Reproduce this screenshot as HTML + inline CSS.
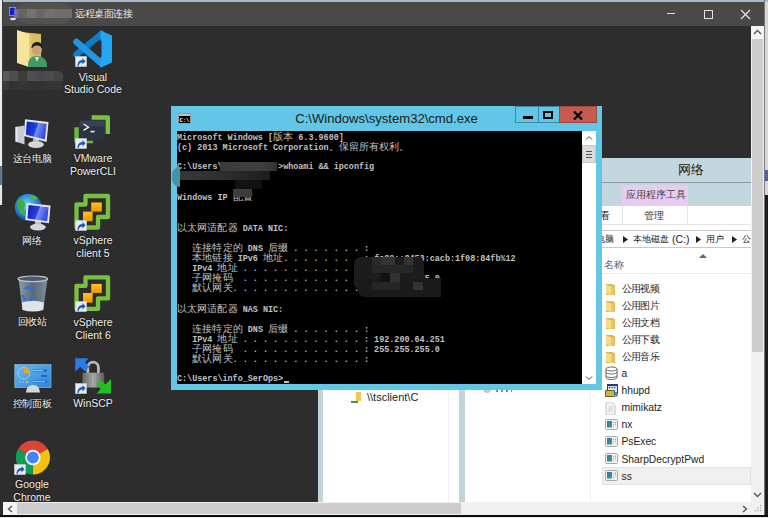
<!DOCTYPE html>
<html><head><meta charset="utf-8">
<style>
*{margin:0;padding:0;box-sizing:border-box}
html,body{width:768px;height:518px;overflow:hidden;background:#2d2d2d;font-family:"Liberation Sans",sans-serif}
.a{position:absolute}
/* outer */
#topstrip{left:0;top:0;width:768px;height:2px;background:#a8bacb}
#leftstrip{left:0;top:0;width:3px;height:205px;background:linear-gradient(180deg,#ececec 0,#ececec 166px,#5a7898 166px,#5a7898 185px,#e6e6e6 185px);border-right:1px solid #3a3a3a}
#rightstrip{left:764px;top:0;width:4px;height:518px;background:linear-gradient(180deg,#a8bacb 0,#a8bacb 2px,#d6d6d6 2px,#d6d6d6 170px,#4a6888 170px,#4a6888 181px,#d6d6d6 181px,#d6d6d6 195px,#1e1e1e 195px);border-left:1px solid #777}
#rdptitle{left:2px;top:2px;width:762px;height:24px;background:#4b4947}
#desk{left:3px;top:26px;width:748px;height:476px;background:#2d2d2d}
#vsb{left:751px;top:26px;width:13px;height:476px;background:#f0f0f0}
#vthumb{left:752px;top:39px;width:11px;height:313px;background:#cdcdcd}
#hsb{left:3px;top:502px;width:761px;height:13px;background:#f0f0f0}
#hthumb{left:17px;top:503px;width:444px;height:11px;background:#cdcdcd}
#bottom{left:0;top:515px;width:768px;height:3px;background:linear-gradient(180deg,#0c0c0c 0,#0c0c0c 2px,#e8e8e8 2px)}
#bottomline{left:0;top:515px;width:0;height:0}
.rdpt{left:75px;top:7px;font-size:10px;letter-spacing:-0.45px;color:#e8e8e8;line-height:14px}
/* desktop icons */
.lbl{position:absolute;color:#f0f0f0;font-size:10.5px;line-height:12.5px;text-align:center;width:70px;text-shadow:0 0 2px #000}
.lbl i{font-style:normal;font-size:10px;letter-spacing:-0.35px}
/* windows behind */
#winA{left:318px;top:300px;width:142px;height:202px;background:#fff;border-left:5px solid #c3d3dc}
#winB{left:459px;top:300px;width:150px;height:202px;background:#fff;border-left:6px solid #c3d3dc}
#explorer{left:596px;top:158px;width:155px;height:344px;background:#fff}
/* cmd */
#cmd{left:171px;top:106px;width:431px;height:284px;background:#62c6e6}
#con{left:177px;top:131px;width:405px;height:253px;background:#000;overflow:hidden}
.cl{position:absolute;left:0;height:10.12px;white-space:pre;font-family:"Liberation Mono",monospace;font-size:8.43px;line-height:10.12px;color:#c0c0c0;font-weight:bold}
.cl i.c{font-style:normal;display:inline-block;width:10.12px;text-align:center;font-weight:normal;font-family:"Liberation Sans",sans-serif;font-size:10px}
#csb{left:582px;top:131px;width:14px;height:253px;background:#fff}
.fi{position:absolute;left:605px;height:17px;width:146px}
.fic{position:absolute;left:0;top:2.5px}.fic svg{display:block}
.fnm{position:absolute;left:16.5px;top:2px;font-size:10.25px;line-height:13px;color:#1e1e1e;white-space:nowrap}
.fnm i.k{font-style:normal;display:inline-block;width:9.4px;font-size:10px}
</style></head><body>
<div class="a" id="topstrip"></div>
<div class="a" id="rdptitle"></div>
<div class="a" id="desk"></div>
<div class="a" id="leftstrip"></div>
<div class="a" id="rightstrip"></div>
<div class="a" id="vsb"></div>
<div class="a" id="vthumb"></div>
<div class="a" id="hsb"></div>
<div class="a" id="hthumb"></div>
<div class="a" id="bottom"></div>
<div class="a" id="bottomline"></div>

<!-- RDP title -->
<svg class="a" style="left:9px;top:7px" width="8" height="14" viewBox="0 0 8 14"><rect x=".5" y=".5" width="6" height="8" fill="#1020d0" stroke="#a0a8b8" stroke-width=".8"/><ellipse cx="4" cy="12" rx="3" ry="1.3" fill="#e0e0e0"/></svg>
<div class="a" style="left:16px;top:3px;width:56px;height:21px;background:#53524f;border-radius:10px"></div>
<div class="a" style="left:14px;top:8.5px;width:58px;height:9.5px;background:linear-gradient(90deg,#6a6fc0 0,#6a6fc0 4px,#666563 4px,#666563 13px,#757371 13px,#757371 22px,#6a6866 22px,#6a6866 31px,#737170 31px,#737170 40px,#6f6d6b 40px)"></div>
<div class="a rdpt">远程桌面连接</div>
<div class="a" style="left:667px;top:13px;width:8px;height:1px;background:#e0e0e0"></div>
<div class="a" style="left:704px;top:10px;width:9px;height:9px;border:1px solid #e0e0e0"></div>
<svg class="a" style="left:740px;top:9px" width="11" height="11" viewBox="0 0 11 11"><path d="M1 1L10 10M10 1L1 10" stroke="#e6e6e6" stroke-width="1.2"/></svg>
<!-- scroll arrows -->
<div class="a" style="left:751px;top:26px;width:13px;height:13px;background:#f4f4f4"></div>
<svg class="a" style="left:753px;top:29px" width="9" height="6" viewBox="0 0 9 6"><path d="M1 5L4.5 1.5L8 5" fill="none" stroke="#555" stroke-width="1.4"/></svg>
<svg class="a" style="left:753px;top:492px" width="9" height="6" viewBox="0 0 9 6"><path d="M1 1L4.5 4.5L8 1" fill="none" stroke="#555" stroke-width="1.4"/></svg>
<div class="a" style="left:3px;top:502px;width:14px;height:13px;background:#f4f4f4"></div>
<svg class="a" style="left:7px;top:505px" width="6" height="8" viewBox="0 0 6 8"><path d="M5 1L1.5 4L5 7" fill="none" stroke="#555" stroke-width="1.4"/></svg>
<svg class="a" style="left:742px;top:505px" width="6" height="8" viewBox="0 0 6 8"><path d="M1 1L4.5 4L1 7" fill="none" stroke="#555" stroke-width="1.4"/></svg>

<!-- desktop icons -->
<!-- user folder -->
<svg class="a" style="left:16px;top:29px" width="32" height="40" viewBox="0 0 32 40"><path d="M5 3l20 2v28H5z" fill="#dcbf5c"/><path d="M1 1l12 4v33L1 34z" fill="#f6e39c"/><path d="M13 5l2 1v31l-2 1z" fill="#e6cc70"/><path d="M12 36c0-6 4-9 9-9s10 3 10 9v2H12z" fill="#3f9a68"/><path d="M19 28l2 5 2-5z" fill="#e8e8e8"/><circle cx="21" cy="21" r="5" fill="#c9a27a"/><path d="M15.5 19c0-4 3-6 5.5-6s5.5 1.5 5.5 5l-1 1c-1-2-3-2.5-5-2.5s-3.5 1-4 2.5z" fill="#1e1e1e"/></svg>
<div class="a" style="left:3px;top:71px;width:60px;height:10px;background:linear-gradient(90deg,#585a5e 0,#585a5e 6px,#4e4e4e 6px,#4e4e4e 15px,#3e3c3a 15px,#3e3c3a 24px,#4f4f51 24px,#4f4f51 33px,#4a4a4a 33px,#4a4a4a 42px,#4c4c4c 42px,#4c4c4c 51px,#454545 51px);border-radius:0 5px 0 0"></div>
<div class="a" style="left:3px;top:81px;width:60px;height:9px;background:linear-gradient(90deg,#3c3c3c 0,#3c3c3c 6px,#333 6px,#333 15px,#363636 15px,#363636 24px,#323232 24px,#323232 42px,#343434 42px)"></div>
<!-- vscode -->
<svg class="a" style="left:73px;top:30px" width="40" height="38" viewBox="0 0 40 38"><path d="M3.5 24.5L28.5 4" stroke="#0e7cc8" stroke-width="6.5" stroke-linecap="round"/><path d="M3.5 12L28.5 33.5" stroke="#1c98e4" stroke-width="6.5" stroke-linecap="round"/><path d="M27.5 .5L39 5.5V32.5L27.5 37.7L27.5 27L28.5 27V10.5L27.5 10.5z" fill="#24a6f0"/></svg>
<svg class="a" style="left:74.5px;top:56.3px" width="12" height="11" viewBox="0 0 12 11"><rect x=".5" y=".5" width="11" height="10" fill="#e8ecf0" stroke="#c8ccd0" stroke-width=".6"/><path d="M2.5 10C2.5 6 4.5 4 7.5 4V2l3 3.2-3 3.2V6.5C5.5 6.5 4 7.5 3.5 10z" fill="#1f58b8"/></svg>
<div class="lbl" style="left:58px;top:71px;line-height:12px">Visual<br>Studio Code</div>
<!-- this pc -->
<svg class="a" style="left:8px;top:110px" width="50" height="40" viewBox="0 0 50 40"><defs><linearGradient id="scr" x1="0" y1="0" x2="1" y2="0.3"><stop offset="0" stop-color="#0c1cb8"/><stop offset=".55" stop-color="#2a40e0"/><stop offset=".6" stop-color="#7890f0"/><stop offset="1" stop-color="#3850e0"/></linearGradient></defs>
<path d="M7.5 17L16.5 15.5V34.5L7.5 31.5z" fill="#c8ccd2"/><path d="M7.5 17L9.5 16.7V32.2L7.5 31.5z" fill="#e8eaec"/>
<ellipse cx="28" cy="34.5" rx="8" ry="3.5" fill="#d4d6d8"/><path d="M25 29h6v3h-6z" fill="#bfc2c5"/>
<path d="M17 9.2L40.5 12L38.6 31.9L15.9 26z" fill="#e6e9ec"/><path d="M18.8 11.4L38.6 13.8L37 29.6L17.8 24.8z" fill="url(#scr)"/></svg>
<div class="lbl" style="left:-3px;top:152px"><i>这台电脑</i></div>
<!-- powercli -->
<svg class="a" style="left:68px;top:108px" width="50" height="45" viewBox="0 0 50 45">
<path d="M23.6 7.2H40a2 2 0 0 1 2 2V26h-4.5V11.7H23.6z" fill="#78c440"/>
<path d="M6.3 19.3h4.5V30.7H25v4.5H8.3a2 2 0 0 1-2-2z" fill="#6cb83a"/>
<rect x="11.4" y="12.5" width="25.8" height="20.3" rx="1.5" fill="#2c3242"/><rect x="11.4" y="12.5" width="25.8" height="6" rx="1.5" fill="#3a4152"/>
<path d="M15.5 16l5 3.2-5 3.2" fill="none" stroke="#f0f0f0" stroke-width="1.4"/><path d="M22.5 23.6h4" stroke="#f0f0f0" stroke-width="1.6"/></svg>
<svg class="a" style="left:74.6px;top:137.7px" width="12" height="11" viewBox="0 0 12 11"><rect x=".5" y=".5" width="11" height="10" fill="#e8ecf0" stroke="#c8ccd0" stroke-width=".6"/><path d="M2.5 10C2.5 6 4.5 4 7.5 4V2l3 3.2-3 3.2V6.5C5.5 6.5 4 7.5 3.5 10z" fill="#1f58b8"/></svg>
<div class="lbl" style="left:58px;top:152px">VMware<br>PowerCLI</div>
<!-- network -->
<svg class="a" style="left:8px;top:188px" width="50" height="45" viewBox="0 0 50 45"><defs><radialGradient id="glb" cx=".45" cy=".4" r=".6"><stop offset="0" stop-color="#7ad8f8"/><stop offset=".6" stop-color="#2a88d8"/><stop offset="1" stop-color="#1a4aa0"/></radialGradient></defs>
<circle cx="20.3" cy="19.3" r="13.5" fill="url(#glb)"/><path d="M10 12c3-1 6 0 7 3s-2 4-1 7 3 3 2 6c-3 0-6-3-7-6s-2-6-1-10z" fill="#3cb040"/><path d="M22 7c3 0 6 1 8 3l-3 2c-2-1-4-1-5-2z" fill="#48b848"/>
<ellipse cx="29.9" cy="39.1" rx="8" ry="3.5" fill="#d4d6d8"/><path d="M27 33h6v3h-6z" fill="#bfc2c5"/>
<path d="M18.8 15L42.5 17.4L41 35.2L17.4 31.9z" fill="#e6e9ec"/><path d="M20.6 17.1L40.6 19.2L39.3 33.2L19.4 30.4z" fill="url(#scr)"/></svg>
<div class="lbl" style="left:-3px;top:234px"><i>网络</i></div>
<!-- vsphere 5 -->
<svg class="a" style="left:68px;top:188px" width="50" height="45" viewBox="0 0 50 45"><defs><linearGradient id="org" x1="0" y1="0" x2="0" y2="1"><stop offset="0" stop-color="#ffc020"/><stop offset="1" stop-color="#f09800"/></linearGradient></defs>
<path d="M17.5 8H40V29H30V39.5H8.5V16.5H17.5z" fill="none" stroke="#78c040" stroke-width="4.3" stroke-linejoin="round"/>
<rect x="23.2" y="14.5" width="10.6" height="9.1" fill="url(#org)"/><rect x="15" y="23.6" width="9.6" height="9.7" fill="url(#org)"/></svg>
<svg class="a" style="left:74.8px;top:219.9px" width="12" height="11" viewBox="0 0 12 11"><rect x=".5" y=".5" width="11" height="10" fill="#e8ecf0" stroke="#c8ccd0" stroke-width=".6"/><path d="M2.5 10C2.5 6 4.5 4 7.5 4V2l3 3.2-3 3.2V6.5C5.5 6.5 4 7.5 3.5 10z" fill="#1f58b8"/></svg>
<div class="lbl" style="left:58px;top:234px">vSphere<br>client 5</div>
<!-- recycle -->
<svg class="a" style="left:8px;top:268px" width="50" height="45" viewBox="0 0 50 45"><defs><linearGradient id="bin" x1="0" y1="0" x2="1" y2="0"><stop offset="0" stop-color="#9aa8b4"/><stop offset=".5" stop-color="#5e6e80"/><stop offset="1" stop-color="#8a98a6"/></linearGradient></defs>
<path d="M10.5 10.8L14.5 42h20.7l4.4-31.2z" fill="url(#bin)" opacity=".9"/>
<ellipse cx="24.8" cy="10.8" rx="14.8" ry="2.8" fill="#4a5a6c" stroke="#c0c6cc" stroke-width="1.2"/>
<path d="M13.8 34.5Q25 31 36 34.5L35.2 42Q25 45 14.5 42z" fill="#dfe2e6"/>
<path d="M17 21c2-2 5-2 7 0l-2 1.5M15 27c0 2 1 4 3 5M21 32c2 0 4-1 5-3" fill="none" stroke="#2a70e0" stroke-width="2.4"/></svg>
<div class="lbl" style="left:-3px;top:315px"><i>回收站</i></div>
<!-- vsphere 6 -->
<svg class="a" style="left:68px;top:268px" width="50" height="45" viewBox="0 0 50 45">
<path d="M17.5 9.4H40V30.4H30V40.9H8.5V17.9H17.5z" fill="none" stroke="#78c040" stroke-width="4.3" stroke-linejoin="round"/>
<rect x="23.2" y="15.9" width="10.6" height="9.1" fill="url(#org)"/><rect x="15" y="25" width="9.6" height="9.7" fill="url(#org)"/></svg>
<svg class="a" style="left:74.8px;top:301.3px" width="12" height="11" viewBox="0 0 12 11"><rect x=".5" y=".5" width="11" height="10" fill="#e8ecf0" stroke="#c8ccd0" stroke-width=".6"/><path d="M2.5 10C2.5 6 4.5 4 7.5 4V2l3 3.2-3 3.2V6.5C5.5 6.5 4 7.5 3.5 10z" fill="#1f58b8"/></svg>
<div class="lbl" style="left:58px;top:316px">vSphere<br>Client 6</div>
<!-- control panel -->
<svg class="a" style="left:8px;top:350px" width="50" height="45" viewBox="0 0 50 45"><defs><linearGradient id="cpg" x1="0" y1="0" x2="1" y2="1"><stop offset="0" stop-color="#6ab8ee"/><stop offset="1" stop-color="#2f86d6"/></linearGradient></defs>
<rect x="6.8" y="14.5" width="36.2" height="23.1" fill="url(#cpg)" stroke="#8ac8f0" stroke-width=".6"/>
<circle cx="15.8" cy="23.3" r="5.8" fill="none" stroke="#b8dcf6" stroke-width=".7"/><path d="M15.8 23.3V17.5A5.8 5.8 0 0 1 21.6 23.3z" fill="#f5a010"/>
<path d="M25 20.5h14M25 26h14M25 31.5h14" stroke="#1a68c8" stroke-width="2"/><path d="M25 20.5h10M25 26h8M25 31.5h12" stroke="#7ad0fa" stroke-width="1.2"/>
<circle cx="12" cy="32" r=".9" fill="#9ad"/><circle cx="15.5" cy="32" r=".9" fill="#9ad"/><circle cx="19" cy="32" r=".9" fill="#fc6"/>
<path d="M17.9 42.5Q18.5 35 25 35T32 42.5z" fill="#d8d8d8"/></svg>
<div class="lbl" style="left:-3px;top:397px"><i>控制面板</i></div>
<!-- winscp -->
<svg class="a" style="left:68px;top:350px" width="50" height="45" viewBox="0 0 50 45"><defs><linearGradient id="lk" x1="0" y1="0" x2="1" y2="0"><stop offset="0" stop-color="#6a6a6a"/><stop offset=".5" stop-color="#b0b0b0"/><stop offset="1" stop-color="#5a5a5a"/></linearGradient></defs>
<path d="M19.8 23v-5.5a5.3 5.3 0 0 1 10.6 0V23" fill="none" stroke="#b8b8b8" stroke-width="2.8"/>
<rect x="14.5" y="22.7" width="21.7" height="14.9" rx="1" fill="url(#lk)"/><path d="M17 23v14M20 23v14M23 23v14M26 23v14M29 23v14M32 23v14" stroke="#6a6a6a" stroke-width=".6" opacity=".6"/>
<path d="M7.2 8.2h13.6l-4 4 4.5 4.5-4.5 4.5-4.5-4.5-5.1 5z" fill="#2a7ae8"/>
<path d="M43 43.4H28.5l4.3-4.3-4.5-4.5 4.5-4.5 4.5 4.5 5.7-5.6z" fill="#22c022"/></svg>
<svg class="a" style="left:74.8px;top:382.8px" width="12" height="11" viewBox="0 0 12 11"><rect x=".5" y=".5" width="11" height="10" fill="#e8ecf0" stroke="#c8ccd0" stroke-width=".6"/><path d="M2.5 10C2.5 6 4.5 4 7.5 4V2l3 3.2-3 3.2V6.5C5.5 6.5 4 7.5 3.5 10z" fill="#1f58b8"/></svg>
<div class="lbl" style="left:58px;top:397px">WinSCP</div>
<!-- chrome -->
<svg class="a" style="left:8px;top:430px" width="50" height="48" viewBox="0 0 50 48">
<path d="M24.9 27.5L10.1 19A17.1 17.1 0 0 1 39.7 19z" fill="#db4437"/>
<path d="M24.9 27.5L39.7 19A17.1 17.1 0 0 1 24.9 44.6z" fill="#f4c20d"/>
<path d="M24.9 27.5V44.6A17.1 17.1 0 0 1 10.1 19z" fill="#0f9d58"/>
<path d="M24.9 19.8h14.8L24.9 27.5zM31.5 31.5L24.9 44.6l0-17.1zM18.3 31.5L10.1 19l14.8 8.5z" fill="none"/>
<circle cx="24.9" cy="27.5" r="7.7" fill="#fff"/><circle cx="24.9" cy="27.5" r="6" fill="#4285f4"/></svg>
<svg class="a" style="left:14.3px;top:464.3px" width="12" height="11" viewBox="0 0 12 11"><rect x=".5" y=".5" width="11" height="10" fill="#e8ecf0" stroke="#c8ccd0" stroke-width=".6"/><path d="M2.5 10C2.5 6 4.5 4 7.5 4V2l3 3.2-3 3.2V6.5C5.5 6.5 4 7.5 3.5 10z" fill="#1f58b8"/></svg>
<div class="lbl" style="left:-3px;top:478px">Google<br>Chrome</div>

<!-- windows behind -->
<div class="a" id="winA"></div>
<div class="a" style="left:448px;top:390px;width:1px;height:112px;background:#f0f0f0"></div>
<svg class="a" style="left:350px;top:392px" width="14" height="12" viewBox="0 0 14 12"><path d="M6 0h5v9H6z" fill="#f0c850"/><path d="M1 9h7v2H1z" fill="#30a040"/></svg>
<div class="a" style="left:367px;top:391px;font-size:11px;line-height:13px;color:#1e1e1e">\\tsclient\C</div>
<div class="a" id="winB"></div>
<div class="a" style="left:590px;top:390px;width:1px;height:112px;background:#f0f0f0"></div>
<!-- explorer -->
<div class="a" id="explorer"></div>
<div class="a" style="left:596px;top:158px;width:155px;height:48px;background:#c4d7df"></div>
<div class="a" style="left:596px;top:182px;width:155px;height:1px;background:#8a9aa2"></div>
<div class="a" style="left:678px;top:163px;font-size:12.5px;line-height:15px;color:#222">网络</div>
<div class="a" style="left:622px;top:185px;width:66px;height:21px;background:#e6ccf2"></div>
<div class="a" style="left:626px;top:189px;font-size:9.5px;line-height:12px;color:#444">应用程序工具</div>
<div class="a" style="left:622px;top:206px;width:1px;height:18px;background:#e4e4e4"></div>
<div class="a" style="left:687px;top:206px;width:1px;height:18px;background:#e4e4e4"></div>
<div class="a" style="left:644px;top:209px;font-size:10px;line-height:13px;color:#333">管理</div>
<div class="a" style="left:600px;top:209px;font-size:10px;line-height:13px;color:#333">看</div>
<div class="a" style="left:596px;top:224px;width:155px;height:1px;background:#e8e8e8"></div>
<div class="a" style="left:596px;top:230px;width:155px;height:1px;background:#c8c8c8"></div>
<div class="a" style="left:596px;top:247px;width:155px;height:1px;background:#c8c8c8"></div>
<div class="a" style="left:596px;top:233px;width:155px;height:13px;overflow:hidden;font-size:9.3px;line-height:13px;color:#222;white-space:nowrap">
<span class="a" style="left:0px">电脑</span>
<svg class="a" style="left:27px;top:3px" width="5" height="7" viewBox="0 0 5 7"><path d="M0 0L5 3.5L0 7z" fill="#222"/></svg>
<span class="a" style="left:37.4px">本地磁盘</span><span class="a" style="left:76px;font-size:10.5px">(C:)</span>
<svg class="a" style="left:100px;top:3px" width="5" height="7" viewBox="0 0 5 7"><path d="M0 0L5 3.5L0 7z" fill="#222"/></svg>
<span class="a" style="left:110.4px">用户</span>
<svg class="a" style="left:136px;top:3px" width="5" height="7" viewBox="0 0 5 7"><path d="M0 0L5 3.5L0 7z" fill="#222"/></svg>
<span class="a" style="left:146px">公</span>
</div>
<svg class="a" style="left:699px;top:253px" width="8" height="5" viewBox="0 0 8 5"><path d="M0 5L4 1L8 5z" fill="#4a6a90"/></svg>
<div class="a" style="left:604px;top:258px;font-size:10px;line-height:13px;color:#4c607a">名称</div>
<div class="a" style="left:596px;top:273px;width:155px;height:1px;background:#eaeaea"></div>
<div class="a" style="left:602px;top:467px;width:149px;height:18px;background:#f0f0f0;border:1px solid #e2e2e2"></div>
<div class="fi" style="top:279.5px"><span class="fic"><svg width="11" height="11" viewBox="0 0 12 14" preserveAspectRatio="none" style="margin-top:2px"><path d="M1 0h7l3 2v12H1z" fill="#dcb654"/><path d="M1 1l6 2v11l-6-2z" fill="#f6dc84"/><path d="M7 3h3v11H7z" fill="#e9c868"/></svg></span><span class="fnm"><i class="k">公</i><i class="k">用</i><i class="k">视</i><i class="k">频</i></span></div>
<div class="fi" style="top:296.6px"><span class="fic"><svg width="11" height="11" viewBox="0 0 12 14" preserveAspectRatio="none" style="margin-top:2px"><path d="M1 0h7l3 2v12H1z" fill="#dcb654"/><path d="M1 1l6 2v11l-6-2z" fill="#f6dc84"/><path d="M7 3h3v11H7z" fill="#e9c868"/></svg></span><span class="fnm"><i class="k">公</i><i class="k">用</i><i class="k">图</i><i class="k">片</i></span></div>
<div class="fi" style="top:313.7px"><span class="fic"><svg width="11" height="11" viewBox="0 0 12 14" preserveAspectRatio="none" style="margin-top:2px"><path d="M1 0h7l3 2v12H1z" fill="#dcb654"/><path d="M1 1l6 2v11l-6-2z" fill="#f6dc84"/><path d="M7 3h3v11H7z" fill="#e9c868"/></svg></span><span class="fnm"><i class="k">公</i><i class="k">用</i><i class="k">文</i><i class="k">档</i></span></div>
<div class="fi" style="top:330.8px"><span class="fic"><svg width="11" height="11" viewBox="0 0 12 14" preserveAspectRatio="none" style="margin-top:2px"><path d="M1 0h7l3 2v12H1z" fill="#dcb654"/><path d="M1 1l6 2v11l-6-2z" fill="#f6dc84"/><path d="M7 3h3v11H7z" fill="#e9c868"/></svg></span><span class="fnm"><i class="k">公</i><i class="k">用</i><i class="k">下</i><i class="k">载</i></span></div>
<div class="fi" style="top:347.9px"><span class="fic"><svg width="11" height="11" viewBox="0 0 12 14" preserveAspectRatio="none" style="margin-top:2px"><path d="M1 0h7l3 2v12H1z" fill="#dcb654"/><path d="M1 1l6 2v11l-6-2z" fill="#f6dc84"/><path d="M7 3h3v11H7z" fill="#e9c868"/></svg></span><span class="fnm"><i class="k">公</i><i class="k">用</i><i class="k">音</i><i class="k">乐</i></span></div>
<div class="fi" style="top:365.0px"><span class="fic"><svg width="13" height="14" viewBox="0 0 13 14" style="margin-top:-1.5px"><g fill="#fff" stroke="#555" stroke-width=".9"><path d="M1 9.5v2c0 1.2 2.4 2 5.5 2s5.5-.8 5.5-2v-2"/><path d="M1 6v3.5c0 1.2 2.4 2 5.5 2s5.5-.8 5.5-2V6"/><path d="M1 3v3c0 1.2 2.4 2 5.5 2s5.5-.8 5.5-2V3"/><ellipse cx="6.5" cy="3" rx="5.5" ry="2"/></g></svg></span><span class="fnm">a</span></div>
<div class="fi" style="top:382.1px"><span class="fic"><svg width="13" height="13" viewBox="0 0 13 13" style="margin-top:-1px"><rect x="2.5" y=".5" width="10" height="9" fill="#e8e8f4" stroke="#283a80"/><rect x="2.5" y=".5" width="10" height="1.6" fill="#283a80"/><circle cx="4.5" cy="3.6" r=".9" fill="#d03030"/><circle cx="7" cy="3.6" r=".9" fill="#20a060"/><circle cx="9.5" cy="3.6" r=".9" fill="#3060d0"/><path d="M.5 6.5h9v6h-9z" fill="#c8b83a" stroke="#4a4420" stroke-width=".8"/><path d="M9.5 8h3v4.5h-3z" fill="#3a70c0"/><path d="M10.5 9h1v1h-1zM9.5 11h1v1h-1z" fill="#f0d040"/></svg></span><span class="fnm">hhupd</span></div>
<div class="fi" style="top:399.2px"><span class="fic"><svg width="11" height="13" viewBox="0 0 11 13"><path d="M1 0h6l3 3v10H1z" fill="#f4f4f4" stroke="#b8b8b8" stroke-width=".8"/><path d="M3 5h5M3 7h5M3 9h5" stroke="#d0d0d0"/></svg></span><span class="fnm">mimikatz</span></div>
<div class="fi" style="top:416.3px"><span class="fic"><svg width="13" height="11" viewBox="0 0 13 11" ><defs><linearGradient id="eg" x1="0" y1="0" x2="1" y2="1"><stop offset="0" stop-color="#3a6fc0"/><stop offset="1" stop-color="#3aa070"/></linearGradient></defs><rect x=".5" y=".5" width="12" height="10" rx="1" fill="#f2f2f2" stroke="#a8a8a8"/><rect x="2" y="2" width="5" height="6.5" fill="url(#eg)"/><path d="M8.5 3v1M8.5 5v1M8.5 7v1M10.5 2.5v2M10.5 5.5v1" stroke="#6a9" stroke-width=".8"/></svg></span><span class="fnm">nx</span></div>
<div class="fi" style="top:433.4px"><span class="fic"><svg width="13" height="11" viewBox="0 0 13 11" ><defs><linearGradient id="eg" x1="0" y1="0" x2="1" y2="1"><stop offset="0" stop-color="#3a6fc0"/><stop offset="1" stop-color="#3aa070"/></linearGradient></defs><rect x=".5" y=".5" width="12" height="10" rx="1" fill="#f2f2f2" stroke="#a8a8a8"/><rect x="2" y="2" width="5" height="6.5" fill="url(#eg)"/><path d="M8.5 3v1M8.5 5v1M8.5 7v1M10.5 2.5v2M10.5 5.5v1" stroke="#6a9" stroke-width=".8"/></svg></span><span class="fnm">PsExec</span></div>
<div class="fi" style="top:450.5px"><span class="fic"><svg width="13" height="11" viewBox="0 0 13 11" ><defs><linearGradient id="eg" x1="0" y1="0" x2="1" y2="1"><stop offset="0" stop-color="#3a6fc0"/><stop offset="1" stop-color="#3aa070"/></linearGradient></defs><rect x=".5" y=".5" width="12" height="10" rx="1" fill="#f2f2f2" stroke="#a8a8a8"/><rect x="2" y="2" width="5" height="6.5" fill="url(#eg)"/><path d="M8.5 3v1M8.5 5v1M8.5 7v1M10.5 2.5v2M10.5 5.5v1" stroke="#6a9" stroke-width=".8"/></svg></span><span class="fnm">SharpDecryptPwd</span></div>
<div class="fi" style="top:467.6px"><span class="fic"><svg width="13" height="11" viewBox="0 0 13 11" ><defs><linearGradient id="eg" x1="0" y1="0" x2="1" y2="1"><stop offset="0" stop-color="#3a6fc0"/><stop offset="1" stop-color="#3aa070"/></linearGradient></defs><rect x=".5" y=".5" width="12" height="10" rx="1" fill="#f2f2f2" stroke="#a8a8a8"/><rect x="2" y="2" width="5" height="6.5" fill="url(#eg)"/><path d="M8.5 3v1M8.5 5v1M8.5 7v1M10.5 2.5v2M10.5 5.5v1" stroke="#6a9" stroke-width=".8"/></svg></span><span class="fnm">ss</span></div>

<div class="a" style="left:483px;top:389px;width:8px;height:4px;background:#c8c8c8;border-radius:0 0 4px 4px"></div>
<div class="a" style="left:496px;top:390px;width:18px;height:1.5px;background:repeating-linear-gradient(90deg,#8a8a8a 0,#8a8a8a 1.5px,transparent 1.5px,transparent 5px)"></div>
<svg class="a" style="left:752px;top:503px" width="11" height="11" viewBox="0 0 11 11"><g fill="#a0a0a0"><rect x="8" y="2" width="1.2" height="1.2"/><rect x="5.5" y="4.5" width="1.2" height="1.2"/><rect x="8" y="4.5" width="1.2" height="1.2"/><rect x="3" y="7" width="1.2" height="1.2"/><rect x="5.5" y="7" width="1.2" height="1.2"/><rect x="8" y="7" width="1.2" height="1.2"/></g></svg>
<!-- cmd window -->
<div class="a" id="cmd"></div>
<svg class="a" style="left:178px;top:113px" width="13" height="11" viewBox="0 0 13 11"><rect x=".5" y=".5" width="12" height="10" fill="#000" stroke="#999"/><rect x="1" y="1" width="11" height="2" fill="#c0c0c0"/><text x="1.5" y="9" font-size="5.5" fill="#fff" font-weight="bold" font-family="Liberation Mono">C:\</text></svg>
<div class="a" style="left:171px;top:110.8px;width:431px;text-align:center;font-size:13.1px;line-height:16px;color:#1a1a1a">C:\Windows\system32\cmd.exe</div>
<div class="a" style="left:515px;top:106px;width:24px;height:17px;border:1px solid #3a8aa8;background:#62c6e6"></div>
<div class="a" style="left:522.5px;top:116px;width:10px;height:2.5px;background:#000"></div>
<div class="a" style="left:538px;top:106px;width:22px;height:17px;border:1px solid #3a8aa8;background:#62c6e6"></div>
<div class="a" style="left:543px;top:111px;width:10px;height:7.5px;border:2px solid #000;border-top-width:2.5px"></div>
<div class="a" style="left:559px;top:106px;width:38px;height:17px;background:#c65a4e;border:1px solid #9a4a40"></div>
<svg class="a" style="left:572.5px;top:110.5px" width="10" height="9" viewBox="0 0 10 9"><path d="M1 .5L9 8.5M9 .5L1 8.5" stroke="#000" stroke-width="2.2"/></svg>
<div class="a" id="con">
<div class="cl" style="top:0.50px">Microsoft Windows [<i class="c">版</i><i class="c">本</i> 6.3.9600]</div>
<div class="cl" style="top:10.62px">(c) 2013 Microsoft Corporation<i class="c">。</i><i class="c">保</i><i class="c">留</i><i class="c">所</i><i class="c">有</i><i class="c">权</i><i class="c">利</i><i class="c">。</i></div>
<div class="cl" style="top:30.86px">C:\Users\           &gt;whoami &amp;&amp; ipconfig</div>
<div class="cl" style="top:61.22px">Windows IP <i class="c">配</i><i class="c">置</i></div>
<div class="cl" style="top:91.58px"><i class="c">以</i><i class="c">太</i><i class="c">网</i><i class="c">适</i><i class="c">配</i><i class="c">器</i> DATA NIC:</div>
<div class="cl" style="top:111.82px">   <i class="c">连</i><i class="c">接</i><i class="c">特</i><i class="c">定</i><i class="c">的</i> DNS <i class="c">后</i><i class="c">缀</i> . . . . . . . :</div>
<div class="cl" style="top:121.94px">   <i class="c">本</i><i class="c">地</i><i class="c">链</i><i class="c">接</i> IPv6 <i class="c">地</i><i class="c">址</i>. . . . . . . . : fe80::8453:cacb:1f08:84fb%12</div>
<div class="cl" style="top:132.06px">   IPv4 <i class="c">地</i><i class="c">址</i> . . . . . . . . . . . . :</div>
<div class="cl" style="top:142.18px">   <i class="c">子</i><i class="c">网</i><i class="c">掩</i><i class="c">码</i>  . . . . . . . . . . . . : 255.255.255.0</div>
<div class="cl" style="top:152.30px">   <i class="c">默</i><i class="c">认</i><i class="c">网</i><i class="c">关</i>. . . . . . . . . . . . . :</div>
<div class="cl" style="top:172.54px"><i class="c">以</i><i class="c">太</i><i class="c">网</i><i class="c">适</i><i class="c">配</i><i class="c">器</i> NAS NIC:</div>
<div class="cl" style="top:192.78px">   <i class="c">连</i><i class="c">接</i><i class="c">特</i><i class="c">定</i><i class="c">的</i> DNS <i class="c">后</i><i class="c">缀</i> . . . . . . . :</div>
<div class="cl" style="top:202.90px">   IPv4 <i class="c">地</i><i class="c">址</i> . . . . . . . . . . . . : 192.200.64.251</div>
<div class="cl" style="top:213.02px">   <i class="c">子</i><i class="c">网</i><i class="c">掩</i><i class="c">码</i>  . . . . . . . . . . . . : 255.255.255.0</div>
<div class="cl" style="top:223.14px">   <i class="c">默</i><i class="c">认</i><i class="c">网</i><i class="c">关</i>. . . . . . . . . . . . . :</div>
<div class="cl" style="top:243.38px">C:\Users\info_SerOps&gt;</div>
<div class="a" style="left:43px;top:31px;width:57px;height:9px;background:linear-gradient(90deg,#3a3a3a,#404040 70%,#333)"></div>
<div class="a" style="left:3px;top:39.5px;width:90px;height:9.5px;background:linear-gradient(90deg,#383838,#2e2e2e 50%,#1c1c1c)"></div>
<div class="a" style="left:58px;top:49px;width:27px;height:9px;background:#121212"></div>
<div class="a" style="left:56px;top:57.5px;width:19px;height:8px;background:#3c3c3c"></div>
<div class="a" style="left:106.5px;top:250px;width:5px;height:2px;background:#c0c0c0"></div>
<div class="a" style="left:177px;top:126px;width:70px;height:33px;background:#1c1c1c;border-radius:7px"></div>
<div class="a" style="left:181px;top:147px;width:83px;height:19px;background:#1a1a1a;border-radius:7px 0 0 7px"></div>
<div class="a" style="left:195px;top:126px;width:9px;height:8px;background:#2a2a2a"></div>
<div class="a" style="left:204px;top:126px;width:14px;height:8px;background:#333"></div>
<div class="a" style="left:227px;top:126px;width:9px;height:8px;background:#333"></div>
<div class="a" style="left:195px;top:134px;width:41px;height:8px;background:#262626"></div>
<div class="a" style="left:204px;top:142px;width:9px;height:9px;background:#111"></div>
<div class="a" style="left:213px;top:142px;width:10px;height:9px;background:#313131"></div>
<div class="a" style="left:236px;top:151px;width:10px;height:8px;background:#333"></div>
<div class="a" style="left:195px;top:151px;width:28px;height:8px;background:#262626"></div>
</div>
<div class="a" id="csb"></div>
<div class="a" style="left:172px;top:167px;width:8px;height:20px;background:#4592ae;border-radius:8px 0 0 8px"></div>
<div class="a" style="left:582px;top:145px;width:14px;height:18px;background:#dadada;border:1px solid #c4c4c4"></div>
<div class="a" style="left:586px;top:151px;width:6px;height:1px;background:#555"></div>
<div class="a" style="left:586px;top:154px;width:6px;height:1px;background:#555"></div>
<div class="a" style="left:586px;top:157px;width:6px;height:1px;background:#555"></div>
<svg class="a" style="left:585px;top:135px" width="8" height="5" viewBox="0 0 8 5"><path d="M1 4.5L4 1.5L7 4.5" fill="none" stroke="#444" stroke-width="1"/></svg>
<svg class="a" style="left:585px;top:376px" width="8" height="5" viewBox="0 0 8 5"><path d="M1 .5L4 3.5L7 .5" fill="none" stroke="#444" stroke-width="1"/></svg>
</body></html>
